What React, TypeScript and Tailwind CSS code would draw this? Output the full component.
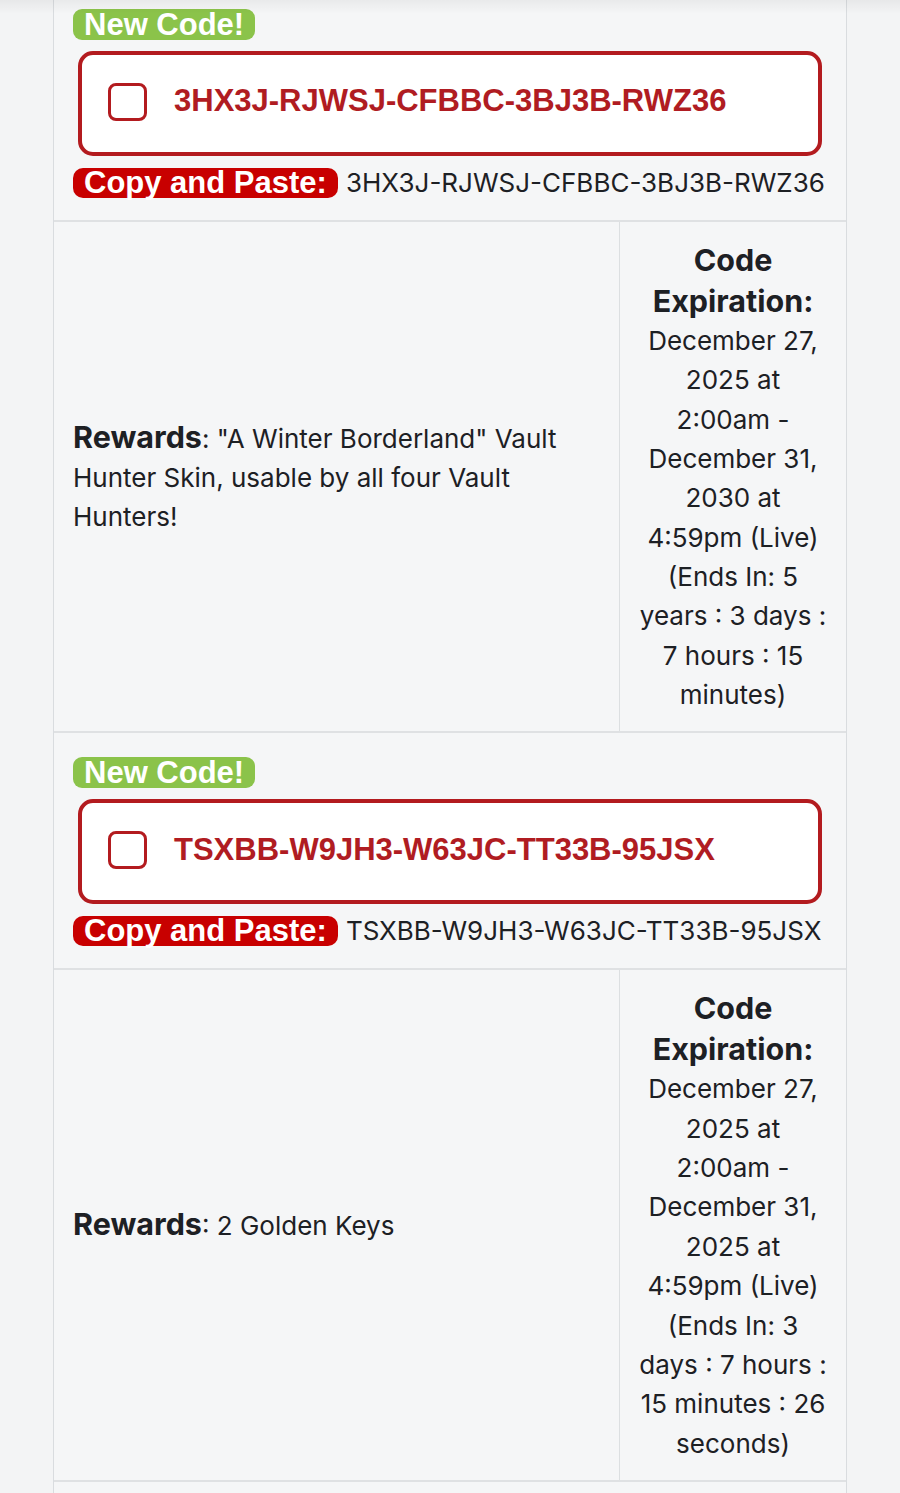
const codes = [
  {
    code: '3HX3J-RJWSJ-CFBBC-3BJ3B-RWZ36',
    rewardTitle: 'Rewards',
    reward: ': "A Winter Borderland" Vault Hunter Skin, usable by all four Vault Hunters!',
    expiry: [
      'December 27,',
      '2025 at',
      '2:00am -',
      'December 31,',
      '2030 at',
      '4:59pm (Live)',
      '(Ends In: 5',
      'years : 3 days :',
      '7 hours : 15',
      'minutes)',
    ],
  },
  {
    code: 'TSXBB-W9JH3-W63JC-TT33B-95JSX',
    rewardTitle: 'Rewards',
    reward: ': 2 Golden Keys',
    expiry: [
      'December 27,',
      '2025 at',
      '2:00am -',
      'December 31,',
      '2025 at',
      '4:59pm (Live)',
      '(Ends In: 3',
      'days : 7 hours :',
      '15 minutes : 26',
      'seconds)',
    ],
  },
];

function CodeRow({ code }: { code: string }) {
  return (
    <div className="px-[19px] pt-[24px] pb-[22px] border-b-2 border-[#dfe1e3]">
      {/* green badge */}
      <span className="inline-block bg-[#8bc34a] text-white font-bold text-[31px] leading-[31px] px-[11px] rounded-[9px] font-['Liberation_Sans',Arial,sans-serif]">
        New Code!
      </span>

      {/* code box with checkbox */}
      <div className="mt-[10px] mx-[5px] h-[105px] pb-[4px] bg-white border-4 border-[#b31b1f] rounded-[15px] flex items-center pl-[26px]">
        <div className="w-[39px] h-[38px] border-[3.5px] border-[#b31b1f] rounded-[8px] bg-white shrink-0"></div>
        <span className="ml-[27px] text-[31px] font-bold text-[#b01c22] font-['Liberation_Sans',Arial,sans-serif]">
          {code}
        </span>
      </div>

      {/* copy and paste line */}
      <div className="mt-[12px] flex items-center leading-[30px]">
        <span className="inline-block bg-[#c80000] text-white font-bold text-[31px] leading-[30px] px-[11px] rounded-[10px] font-['Liberation_Sans',Arial,sans-serif]">
          Copy and Paste:
        </span>
        <span className="ml-[8px] text-[26px] leading-[30px] text-[#1d2024] font-['Inter',sans-serif]">{code}</span>
      </div>
    </div>
  );
}

function RewardRow({ title, reward, expiry }: { title: string; reward: string; expiry: string[] }) {
  return (
    <div className="flex border-b-2 border-[#dfe1e3] font-['Inter',sans-serif] text-[#1d2024]">
      <div className="flex-1 px-[19px] flex items-center">
        <p className="text-[26px] leading-[39.4px]">
          <b className="text-[30.5px]">{title}</b>
          {reward}
        </p>
      </div>
      <div className="w-[227px] border-l border-[#dcdfe1] py-[17px] text-center">
        <div className="text-[30.5px] leading-[41px] font-bold">
          Code
          <br />
          Expiration:
        </div>
        <div className="text-[26px] leading-[39.35px]">
          {expiry.map((line, i) => (
            <div key={i}>{line}</div>
          ))}
        </div>
      </div>
    </div>
  );
}

export default function App() {
  return (
    <div className="relative min-h-screen bg-[#f3f4f5] overflow-hidden">
      {/* faint shadow from the header above */}
      <div className="absolute top-0 left-0 right-0 h-[14px] bg-gradient-to-b from-black/5 to-transparent pointer-events-none"></div>

      <div className="mx-[53px] -mt-[15px] bg-[#f5f6f7] border-x border-[#d9dcdf]">
        {codes.map((c) => (
          <div key={c.code}>
            <CodeRow code={c.code} />
            <RewardRow title={c.rewardTitle} reward={c.reward} expiry={c.expiry} />
          </div>
        ))}
        <div className="h-[60px]"></div>
      </div>
    </div>
  );
}
